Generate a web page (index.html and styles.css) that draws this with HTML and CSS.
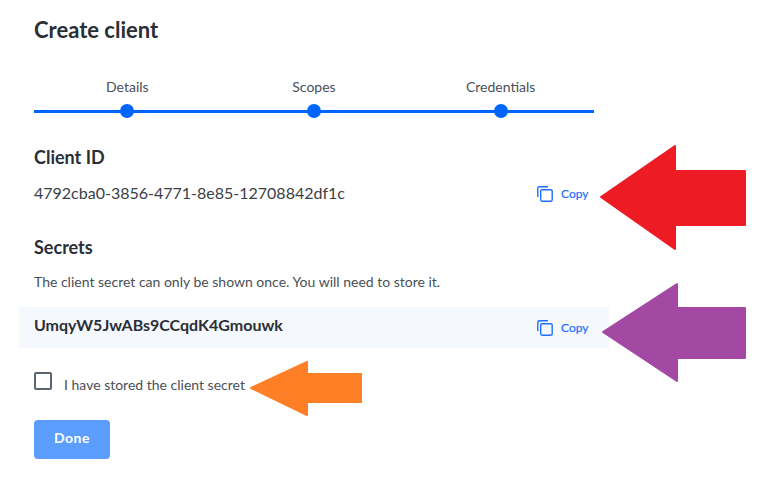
FILE: index.html
```html
<!DOCTYPE html>
<html lang="en">
<head>
<meta charset="utf-8">
<title>Create client</title>
<link rel="stylesheet" href="styles.css">
</head>
<body>
<main class="page">
  <h1 class="title">Create client</h1>
  <ol class="stepper">
    <li class="step"><span class="step-label">Details</span><span class="step-dot"></span></li>
    <li class="step"><span class="step-label">Scopes</span><span class="step-dot"></span></li>
    <li class="step"><span class="step-label">Credentials</span><span class="step-dot"></span></li>
  </ol>
  <h2 class="heading heading-id">Client ID</h2>
  <div class="row row-id">
    <span class="client-id">4792cba0-3856-4771-8e85-12708842df1c</span>
    <button class="copy" type="button">
      <svg class="copy-icon" viewBox="0 0 16 16" width="16" height="16" fill="none" stroke="currentColor" stroke-width="1.4"><path d="M.8 11V2.2A1.4 1.4 0 0 1 2.2.8H11"/><rect x="3.7" y="3.7" width="11.5" height="11.5" rx="1.4"/></svg>
      Copy
    </button>
  </div>
  <h2 class="heading heading-secrets">Secrets</h2>
  <p class="note">The client secret can only be shown once. You will need to store it.</p>
  <div class="row row-secret">
    <span class="secret">UmqyW5JwABs9CCqdK4Gmouwk</span>
    <button class="copy" type="button">
      <svg class="copy-icon" viewBox="0 0 16 16" width="16" height="16" fill="none" stroke="currentColor" stroke-width="1.4"><path d="M.8 11V2.2A1.4 1.4 0 0 1 2.2.8H11"/><rect x="3.7" y="3.7" width="11.5" height="11.5" rx="1.4"/></svg>
      Copy
    </button>
  </div>
  <label class="check"><span class="box"></span><span class="check-text">I have stored the client secret</span></label>
  <button class="done" type="button">Done</button>
</main>
<svg class="arrow arrow-red" viewBox="0 0 148 108" width="148" height="108"><path d="M1 53 75 2V27H145V81H75V105Z" fill="#ed1c24" stroke="#ed1c24" stroke-width="2" stroke-linejoin="round"/></svg>
<svg class="arrow arrow-purple" viewBox="0 0 146 100" width="146" height="100"><path d="M1 49 75 1V25H143V75H75V98Z" fill="#a349a4" stroke="#a349a4" stroke-width="2" stroke-linejoin="round"/></svg>
<svg class="arrow arrow-orange" viewBox="0 0 114 58" width="114" height="58"><path d="M1 28 57 2V14H111V42H57V55Z" fill="#ff7f27" stroke="#ff7f27" stroke-width="2" stroke-linejoin="round"/></svg>
</body>
</html>
```
FILE: styles.css
```css
* { box-sizing: border-box; }
html, body { margin: 0; padding: 0; background: #fff; }
body { width: 784px; height: 482px; overflow: hidden; position: relative; font-family: Lato, sans-serif; color: #2a2f36; }
.page { width: 560px; margin-left: 34px; padding-top: 16px; display: flex; flex-direction: column; align-items: stretch; }
.title { margin: 0; font-size: 22px; line-height: 28px; font-weight: 700; color: #2a2f36; }
.stepper { list-style: none; margin: 34px 0 0; padding: 0; display: grid; grid-template-columns: repeat(3, 1fr); height: 42px; background: linear-gradient(#0065ff, #0065ff) 0 32px / 100% 3px no-repeat; }
.step { display: flex; flex-direction: column; align-items: center; }
.step-label { font-size: 14px; line-height: 18px; color: #4a5058; }
.step-dot { width: 14px; height: 14px; margin-top: 8px; border-radius: 50%; background: #0065ff; }
.heading { margin: 0; font-size: 18px; line-height: 22px; font-weight: 700; color: #2a2f36; }
.heading-id { margin-top: 26px; }
.row { display: flex; align-items: center; justify-content: space-between; }
.row-id { margin-top: 13px; height: 26px; }
.client-id { font-size: 16px; color: #3a4047; margin-bottom: 4px; }
.heading-secrets { margin-top: 29px; }
.note { margin: 15px 0 0; font-size: 14px; line-height: 18px; color: #4a5058; }
.row-secret { margin: 16px -15px 0; padding: 0 15px; height: 41px; background: #f5f8fd; }
.secret { font-size: 16px; font-weight: 700; color: #2a2f36; margin-bottom: 7px; }
.copy { display: flex; align-items: center; gap: 8px; width: 52px; margin-right: 5px; padding: 0; border: 0; background: none; color: #1f6fff; font: 400 12px/16px Lato, sans-serif; -webkit-text-stroke: .2px currentColor; white-space: nowrap; }
.check { display: flex; align-items: flex-start; gap: 12px; margin-top: 24px; font-size: 14px; line-height: 18px; color: #4a5058; }
.check-text { padding-top: 4px; }
.box { width: 18px; height: 18px; border: 2px solid #5b6570; border-radius: 2px; background: #fff; }
.done { align-self: flex-start; margin-top: 26px; width: 76px; height: 39px; padding: 0 0 4px; border: 0; border-radius: 4px; background: #5c9eff; color: #fff; font: 700 14px/18px Lato, sans-serif; letter-spacing: .5px; }
.arrow { position: absolute; display: block; }
.arrow-red { left: 600px; top: 144px; }
.arrow-purple { left: 602px; top: 283px; }
.arrow-orange { left: 250px; top: 360px; }
```
